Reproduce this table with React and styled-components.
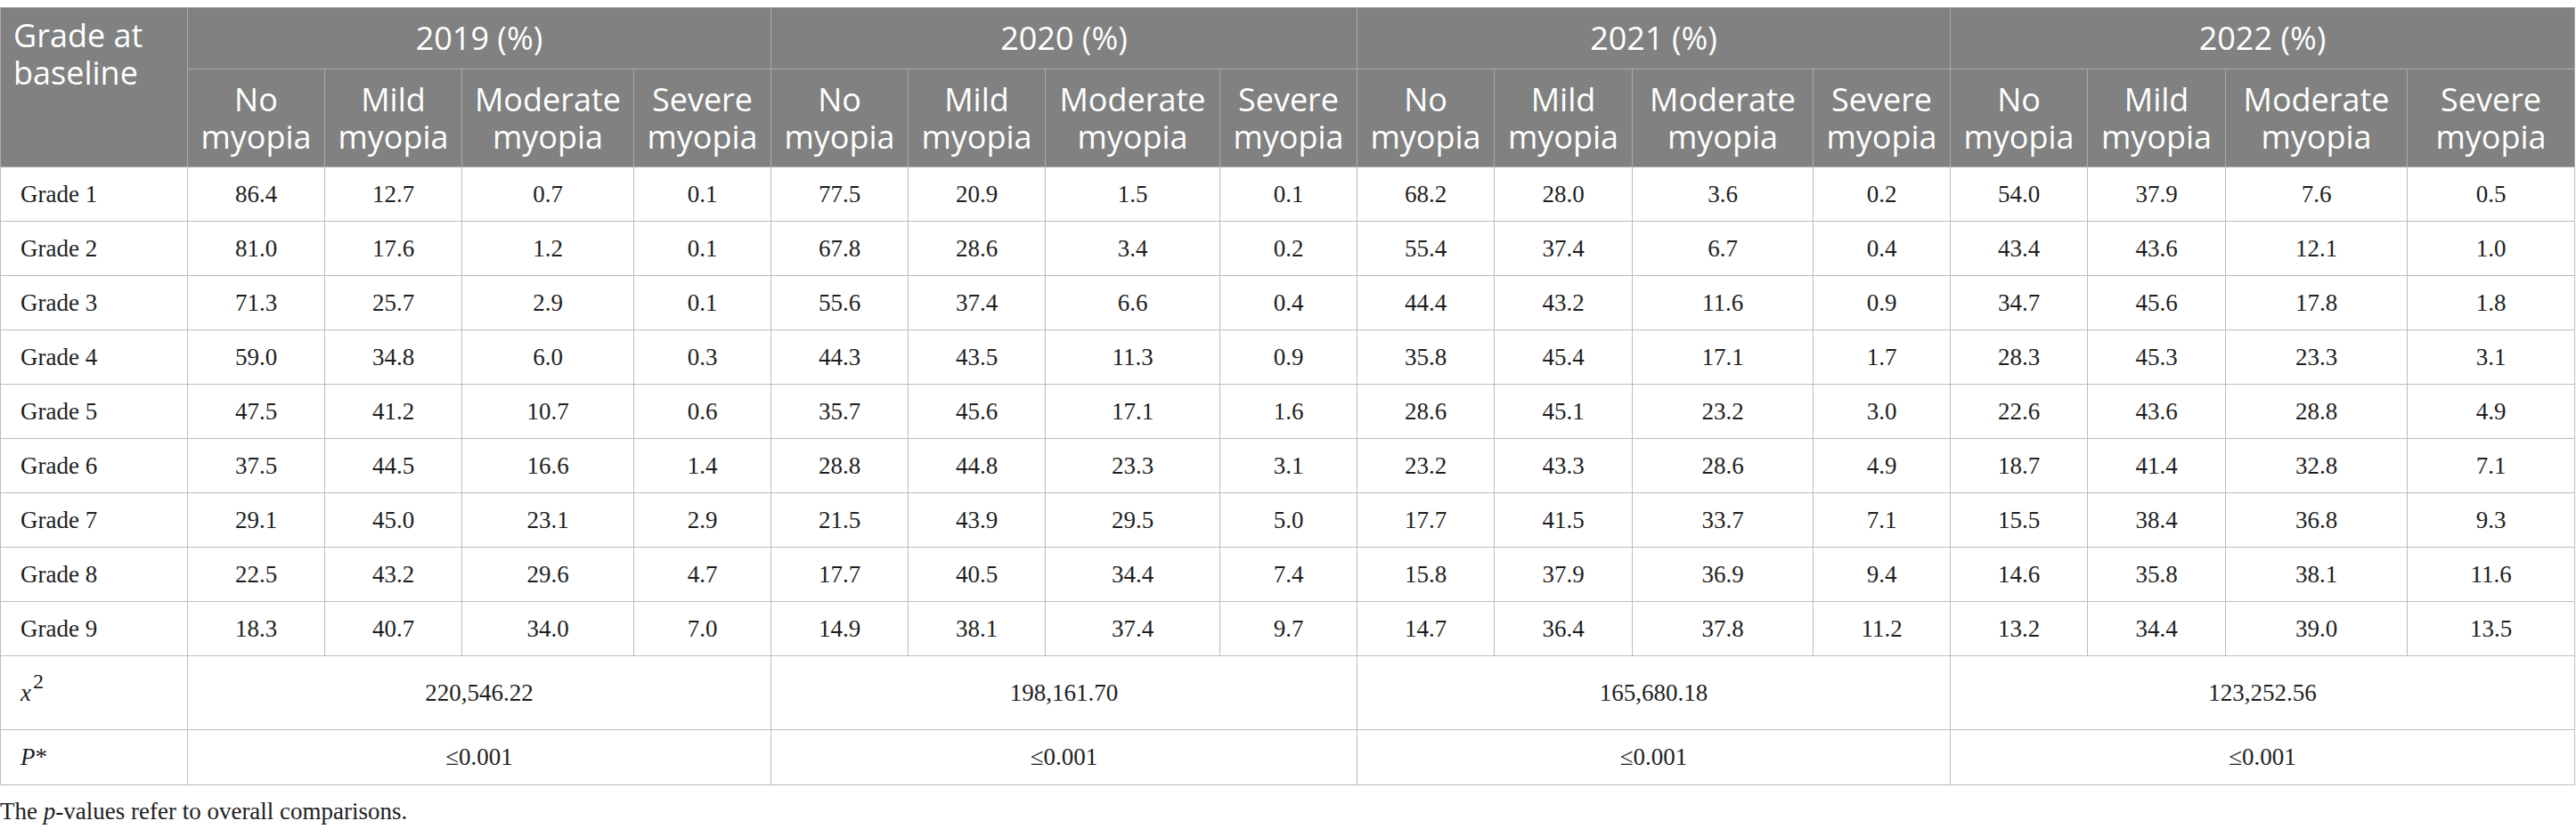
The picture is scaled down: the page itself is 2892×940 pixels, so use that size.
import styled, { createGlobalStyle } from 'styled-components';

const GlobalStyle = createGlobalStyle`
  body {
    margin: 0;
    background: #fff;
  }
`;

const colWidths = [210, 154, 154, 193, 154, 154, 154, 196, 154, 154, 155, 203, 154, 154, 155, 204, 188];
const years = ['2019', '2020', '2021', '2022'];
const levels = [
  ['No', 'myopia'],
  ['Mild', 'myopia'],
  ['Moderate', 'myopia'],
  ['Severe', 'myopia'],
];

const rows = [
  ['Grade 1', '86.4', '12.7', '0.7', '0.1', '77.5', '20.9', '1.5', '0.1', '68.2', '28.0', '3.6', '0.2', '54.0', '37.9', '7.6', '0.5'],
  ['Grade 2', '81.0', '17.6', '1.2', '0.1', '67.8', '28.6', '3.4', '0.2', '55.4', '37.4', '6.7', '0.4', '43.4', '43.6', '12.1', '1.0'],
  ['Grade 3', '71.3', '25.7', '2.9', '0.1', '55.6', '37.4', '6.6', '0.4', '44.4', '43.2', '11.6', '0.9', '34.7', '45.6', '17.8', '1.8'],
  ['Grade 4', '59.0', '34.8', '6.0', '0.3', '44.3', '43.5', '11.3', '0.9', '35.8', '45.4', '17.1', '1.7', '28.3', '45.3', '23.3', '3.1'],
  ['Grade 5', '47.5', '41.2', '10.7', '0.6', '35.7', '45.6', '17.1', '1.6', '28.6', '45.1', '23.2', '3.0', '22.6', '43.6', '28.8', '4.9'],
  ['Grade 6', '37.5', '44.5', '16.6', '1.4', '28.8', '44.8', '23.3', '3.1', '23.2', '43.3', '28.6', '4.9', '18.7', '41.4', '32.8', '7.1'],
  ['Grade 7', '29.1', '45.0', '23.1', '2.9', '21.5', '43.9', '29.5', '5.0', '17.7', '41.5', '33.7', '7.1', '15.5', '38.4', '36.8', '9.3'],
  ['Grade 8', '22.5', '43.2', '29.6', '4.7', '17.7', '40.5', '34.4', '7.4', '15.8', '37.9', '36.9', '9.4', '14.6', '35.8', '38.1', '11.6'],
  ['Grade 9', '18.3', '40.7', '34.0', '7.0', '14.9', '38.1', '37.4', '9.7', '14.7', '36.4', '37.8', '11.2', '13.2', '34.4', '39.0', '13.5'],
];

const chiSquare = ['220,546.22', '198,161.70', '165,680.18', '123,252.56'];

const App = () => {
  return (
    <Page>
      <GlobalStyle />
      <Table>
        <colgroup>
          {colWidths.map((w, i) => (
            <Col key={i} $w={w} />
          ))}
        </colgroup>
        <thead>
          <HeadRow $h={69}>
            <HeadCell rowSpan={2} $first>
              Grade at baseline
            </HeadCell>
            {years.map((y) => (
              <HeadCell key={y} colSpan={4}>
                {y} (%)
              </HeadCell>
            ))}
          </HeadRow>
          <HeadRow $h={110}>
            {years.map((y) =>
              levels.map(([a, b]) => (
                <HeadCell key={y + a}>
                  {a}
                  <br />
                  {b}
                </HeadCell>
              ))
            )}
          </HeadRow>
        </thead>
        <tbody>
          {rows.map(([label, ...values]) => (
            <Row key={label} $h={61}>
              <LabelCell>{label}</LabelCell>
              {values.map((v, i) => (
                <Cell key={i}>{v}</Cell>
              ))}
            </Row>
          ))}
          <Row $h={83}>
            <LabelCell>
              <i>x</i>
              <Sup>2</Sup>
            </LabelCell>
            {chiSquare.map((v) => (
              <Cell key={v} colSpan={4}>
                {v}
              </Cell>
            ))}
          </Row>
          <Row $h={62}>
            <LabelCell>
              <i>P</i>*
            </LabelCell>
            {years.map((y) => (
              <Cell key={y} colSpan={4}>
                ≤0.001
              </Cell>
            ))}
          </Row>
        </tbody>
      </Table>
      <Footnote>
        The <i>p</i>-values refer to overall comparisons.
      </Footnote>
    </Page>
  );
};

export default App;

const Page = styled.div`
  padding-top: 8px;
  width: 2892px;
`;

const Table = styled.table`
  border-collapse: collapse;
  table-layout: fixed;
  width: 2891px;
  border: 1px solid #b9b9b9;
`;

const Col = styled.col`
  width: ${(p) => p.$w}px;
`;

const HeadRow = styled.tr`
  height: ${(p) => p.$h}px;
`;

const HeadCell = styled.th`
  background-color: #808180;
  color: #fff;
  font-family: 'Open Sans', 'Noto Sans', sans-serif;
  font-weight: 400;
  font-size: 36px;
  line-height: 42px;
  border: 1px solid #a9aaa9;
  padding: ${(p) => (p.$first ? '10px 8px 0 14px' : '0 4px')};
  text-align: ${(p) => (p.$first ? 'left' : 'center')};
  vertical-align: ${(p) => (p.$first ? 'top' : 'middle')};
`;

const Row = styled.tr`
  height: ${(p) => p.$h}px;
`;

const Cell = styled.td`
  font-family: 'Liberation Serif', 'Times New Roman', serif;
  font-size: 27px;
  color: #1e1e1e;
  text-align: center;
  vertical-align: middle;
  border: 1px solid #bcbcbc;
  padding: 0 4px;
`;

const LabelCell = styled(Cell)`
  text-align: left;
  padding-left: 22px;
`;

const Sup = styled.sup`
  font-size: 24px;
  vertical-align: 14px;
  line-height: 0;
  margin-left: 2px;
`;

const Footnote = styled.p`
  margin: 14px 0 0;
  font-family: 'Liberation Serif', 'Times New Roman', serif;
  font-size: 27px;
  line-height: 31px;
  color: #1e1e1e;
`;
